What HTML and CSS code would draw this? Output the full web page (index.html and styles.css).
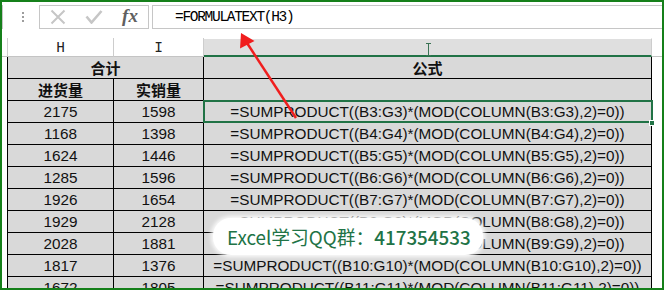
FILE: index.html
```html
<!DOCTYPE html>
<html lang="zh-CN">
<head>
    <meta charset="UTF-8">
    <meta name="viewport" content="width=device-width, initial-scale=1.0">
    <title>FORMULATEXT - Excel</title>
    <link rel="stylesheet" href="styles.css">
</head>
<body>
    <div class="window">
        <!-- formula bar -->
        <div class="formula-bar">
            <div class="name-box"></div>
            <div class="grip"><span></span><span></span><span></span></div>
            <div class="fx-buttons">
                <span class="fx-btn">
                    <svg width="16" height="16" viewBox="0 0 16 16"><path d="M1.5 1.5L14.5 14.5M14.5 1.5L1.5 14.5" stroke="#c6c6c6" stroke-width="2" fill="none"/></svg>
                </span>
                <span class="fx-btn">
                    <svg width="18" height="14" viewBox="0 0 18 14"><path d="M1.5 6.5L6.5 12.5L16.5 1" stroke="#c6c6c6" stroke-width="2.6" fill="none"/></svg>
                </span>
                <span class="fx-btn fx-label">fx</span>
            </div>
            <div class="formula-input">=FORMULATEXT(H3)</div>
        </div>

        <!-- column letters -->
        <div class="col-headers">
            <div class="corner"></div>
            <div class="col-head col-h">H</div>
            <div class="col-head col-i">I</div>
            <div class="col-head col-j"></div>
            <div class="col-head col-rest"></div>
        </div>

        <!-- cells -->
        <div class="sheet">
            <div class="row-heads"></div>
            <div class="grid">
                <div class="cell head span2">合计</div>
                <div class="cell head">公式</div>
                <div class="cell head">进货量</div>
                <div class="cell head">实销量</div>
                <div class="cell"></div>

                <div class="cell">2175</div>
                <div class="cell">1598</div>
                <div class="cell selected">=SUMPRODUCT((B3:G3)*(MOD(COLUMN(B3:G3),2)=0))<span class="handle"></span></div>

                <div class="cell">1168</div>
                <div class="cell">1398</div>
                <div class="cell">=SUMPRODUCT((B4:G4)*(MOD(COLUMN(B4:G4),2)=0))</div>

                <div class="cell">1624</div>
                <div class="cell">1446</div>
                <div class="cell">=SUMPRODUCT((B5:G5)*(MOD(COLUMN(B5:G5),2)=0))</div>

                <div class="cell">1285</div>
                <div class="cell">1596</div>
                <div class="cell">=SUMPRODUCT((B6:G6)*(MOD(COLUMN(B6:G6),2)=0))</div>

                <div class="cell">1926</div>
                <div class="cell">1654</div>
                <div class="cell">=SUMPRODUCT((B7:G7)*(MOD(COLUMN(B7:G7),2)=0))</div>

                <div class="cell">1929</div>
                <div class="cell">2128</div>
                <div class="cell">=SUMPRODUCT((B8:G8)*(MOD(COLUMN(B8:G8),2)=0))</div>

                <div class="cell">2028</div>
                <div class="cell">1881</div>
                <div class="cell">=SUMPRODUCT((B9:G9)*(MOD(COLUMN(B9:G9),2)=0))</div>

                <div class="cell">1817</div>
                <div class="cell">1376</div>
                <div class="cell">=SUMPRODUCT((B10:G10)*(MOD(COLUMN(B10:G10),2)=0))</div>

                <div class="cell">1672</div>
                <div class="cell">1805</div>
                <div class="cell">=SUMPRODUCT((B11:G11)*(MOD(COLUMN(B11:G11),2)=0))</div>
            </div>
            <div class="sheet-rest"></div>
        </div>
    </div>

    <!-- annotations on top of the screenshot -->
    <svg class="arrow" width="666" height="291" viewBox="0 0 666 291">
        <line x1="296" y1="118" x2="247" y2="43" stroke="#f01e1e" stroke-width="2.5"/>
        <polygon points="241,33 240,48.5 254.5,41" fill="#f01e1e"/>
    </svg>
    <svg class="cursor" width="7" height="13" viewBox="0 0 7 13">
        <path d="M1 0.5H6M3.5 0.5V12M1 12.5H6" stroke="#3a7354" stroke-width="1" fill="none"/>
    </svg>
    <div class="watermark">Excel学习QQ群：<b>417354533</b></div>
</body>
</html>
```

FILE: styles.css
```css
* {
    margin: 0;
    padding: 0;
    box-sizing: border-box;
}

html,
body {
    width: 666px;
    height: 291px;
    overflow: hidden;
    background: white;
}

body {
    position: relative;
    font-family: "Liberation Sans", Arial, sans-serif;
    color: #111;
}

.window {
    width: 664px;
    height: 290px;
    border: 2px solid #15801a;
    overflow: hidden;
    display: flex;
    flex-direction: column;
}

/* formula bar */
.formula-bar {
    flex: none;
    height: 36px;
    padding-top: 3px;
    display: flex;
    align-items: flex-start;
}

.name-box {
    flex: none;
    width: 40px;
    height: 24px;
    margin-left: -39px;
    border: 1px solid #c6c6c6;
}

.grip {
    flex: none;
    width: 36px;
    height: 24px;
    padding-left: 4px;
    display: flex;
    flex-direction: column;
    align-items: center;
    justify-content: center;
    gap: 2px;
}

.grip span {
    width: 2px;
    height: 2px;
    background: #9d9d9d;
}

.fx-buttons {
    flex: none;
    width: 110px;
    height: 24px;
    border: 1px solid #c6c6c6;
    display: flex;
}

.fx-btn {
    width: 36px;
    display: flex;
    align-items: center;
    justify-content: center;
}

.fx-label {
    font-family: "Liberation Serif", "Times New Roman", serif;
    font-style: italic;
    font-weight: bold;
    font-size: 19px;
    color: #606060;
    padding-bottom: 2px;
}

.formula-input {
    flex: 1;
    height: 24px;
    margin-left: 3px;
    margin-right: -1px;
    border: 1px solid #c6c6c6;
    padding-left: 22px;
    font-family: "Liberation Mono", "Courier New", monospace;
    font-size: 14.5px;
    letter-spacing: -1.3px;
    line-height: 22px;
    color: #000;
}

/* column letters */
.col-headers {
    flex: none;
    height: 19px;
    display: flex;
}

.corner,
.col-head {
    flex: none;
    height: 19px;
    border-right: 1px solid #cdcdcd;
    border-bottom: 1px solid #c4c4c4;
    font-family: "Liberation Mono", "Courier New", monospace;
    font-size: 14.5px;
    line-height: 20px;
    text-align: center;
    color: #222;
}

.corner {
    width: 6px;
}

.col-h {
    width: 106px;
}

.col-i {
    width: 90px;
}

.col-j {
    width: 448px;
    background: #dfdfdf;
    border-top: 1px solid white;
    border-bottom: 2px solid #217346;
}

.col-rest {
    flex: 1;
    border-right: none;
}

/* cells */
.sheet {
    display: flex;
    align-items: flex-start;
}

.row-heads {
    flex: none;
    width: 5px;
}

.grid {
    flex: none;
    display: grid;
    grid-template-columns: 105px 89px 447px;
    grid-auto-rows: 21px;
    gap: 1px;
    padding: 0 1px 1px 1px;
    background: #000;
}

.cell {
    background: #d9d9d9;
    display: flex;
    align-items: center;
    justify-content: center;
    font-size: 15.3px;
    white-space: nowrap;
}

.cell.head {
    font-family: "Noto Sans CJK SC", sans-serif;
    font-weight: bold;
    font-size: 15px;
}

.span2 {
    grid-column: span 2;
}

.selected {
    position: relative;
}

.selected::after {
    content: "";
    position: absolute;
    left: -1px;
    top: -1px;
    right: -2px;
    bottom: -1px;
    border: 2px solid #217346;
}

.handle {
    position: absolute;
    right: -4px;
    bottom: -4px;
    width: 6px;
    height: 6px;
    background: #217346;
    border: 1px solid white;
    z-index: 1;
}

.sheet-rest {
    flex: 1;
}

/* overlays */
.arrow {
    position: absolute;
    left: 0;
    top: 0;
    pointer-events: none;
}

.cursor {
    position: absolute;
    left: 425px;
    top: 43px;
}

.watermark {
    position: absolute;
    left: 213px;
    top: 218px;
    width: 270px;
    height: 37px;
    padding-left: 14px;
    background: white;
    border-radius: 18px;
    box-shadow: 0 0 4px 2px rgba(255, 255, 255, 0.9);
    font-family: "Noto Sans CJK SC", sans-serif;
    font-size: 18.8px;
    line-height: 38px;
    color: #217346;
    white-space: nowrap;
}

.watermark b {
    font-weight: 500;
}
```
